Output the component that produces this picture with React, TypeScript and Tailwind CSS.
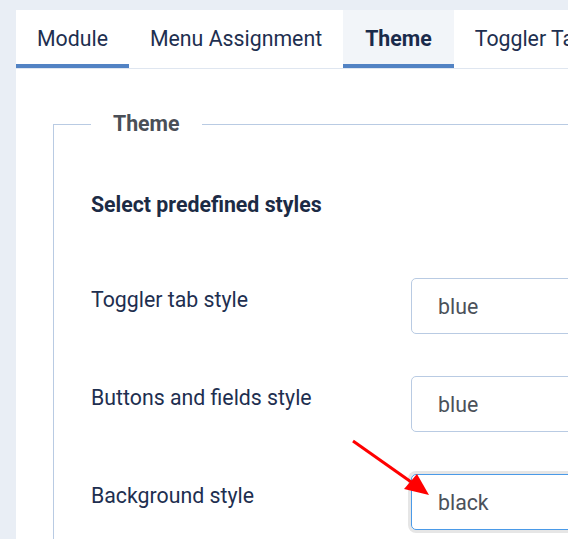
const tabs = [
  { label: "Module", active: false, underline: true },
  { label: "Menu Assignment", active: false, underline: false },
  { label: "Theme", active: true, underline: true },
  { label: "Toggler Tab", active: false, underline: false },
];

const rows = [
  { label: "Toggler tab style", value: "blue", focused: false },
  { label: "Buttons and fields style", value: "blue", focused: false },
  { label: "Background style", value: "black", focused: true },
];

export default function App() {
  return (
    <div
      className="relative min-h-screen overflow-hidden bg-[#e9eef5] pt-[10px] pl-[16px]"
      style={{ fontFamily: "Roboto, 'Liberation Sans', sans-serif" }}
    >
      <div className="w-[700px] bg-white">
        {/* Tabs */}
        <div className="flex border-b border-[#dfe6f0]">
          {tabs.map((tab) => (
            <div
              key={tab.label}
              className={
                "h-[58px] px-[21px] pt-[4px] flex items-center whitespace-nowrap text-[21.3px] border-b-4 " +
                (tab.underline ? "border-[#5283c4] " : "border-transparent ") +
                (tab.active ? "bg-[#f2f5f9] font-bold text-[#1a2b4b] px-[22px]" : "text-[#1e2f50]")
              }
            >
              {tab.label}
            </div>
          ))}
        </div>

        <div className="pt-[43px] pl-[37px] pb-10">
          <fieldset className="border border-[#b9cbe3] pl-[37px] pr-0 pb-10 pt-0 m-0">
            <legend className="px-[22px] text-[21.3px] leading-6 font-bold text-[#4a4f57]">Theme</legend>

            <h3 className="mt-[57px] text-[21.3px] leading-6 font-bold text-[#1c2b45]">Select predefined styles</h3>

            <div className="mt-[61px] flex flex-col gap-[42px]">
              {rows.map((row) => (
                <div key={row.label} className="flex items-start">
                  <div className="w-[320px] pt-[10px] text-[21.3px] leading-6 text-[#1e2f50]">{row.label}</div>
                  <div
                    className={
                      "h-[56px] w-[300px] rounded-[5px] border flex items-center pl-[26px] pt-[2px] text-[21.3px] text-[#4b515a] " +
                      (row.focused
                        ? "border-[#4a9ae8] ring-[3px] ring-[#e6e6e6]"
                        : "border-[#b9cbe3]")
                    }
                  >
                    {row.value}
                  </div>
                </div>
              ))}
            </div>
          </fieldset>
        </div>
      </div>

      {/* annotation arrow */}
      <svg className="absolute left-0 top-0 pointer-events-none" width="568" height="539">
        <line x1="353" y1="441" x2="414" y2="484" stroke="#ff0000" strokeWidth="3" />
        <polygon points="429,495 404,489 417,474" fill="#ff0000" />
      </svg>
    </div>
  );
}
